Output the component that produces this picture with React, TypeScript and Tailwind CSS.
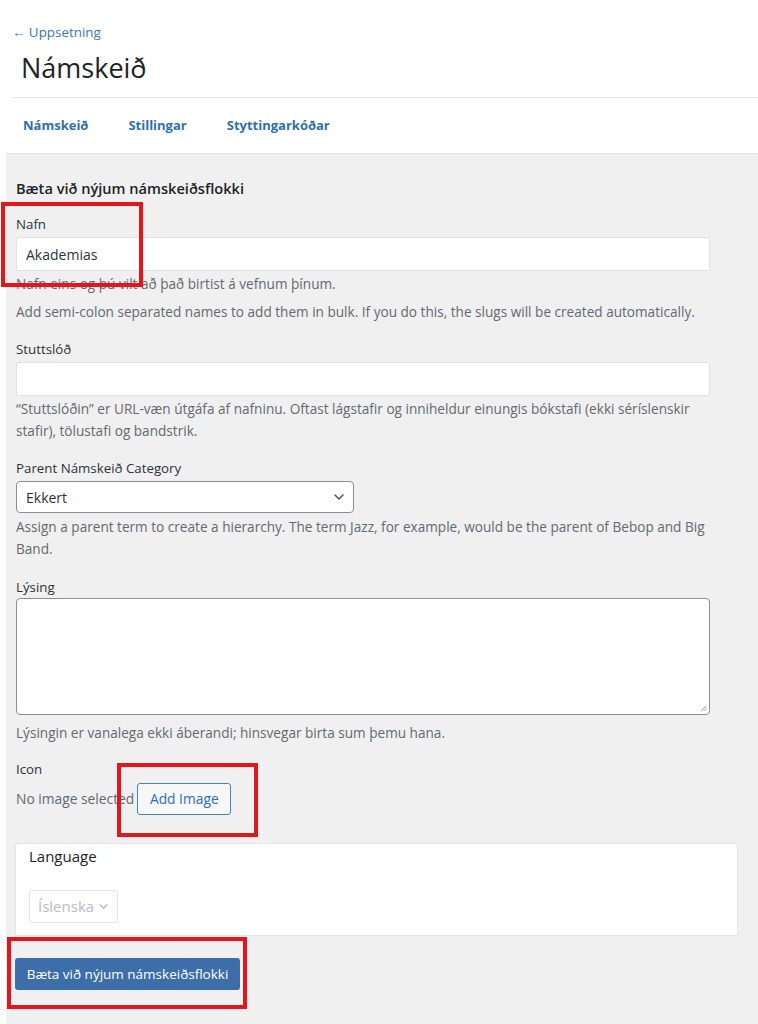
import React from "react";

const font = { fontFamily: '"Open Sans", "Noto Sans", sans-serif' };

function Help({ children, className = "" }: { children: React.ReactNode; className?: string }) {
  return <p className={`text-[13.6px] leading-[22px] text-[#646970] ${className}`}>{children}</p>;
}

function Label({ children, className = "" }: { children: React.ReactNode; className?: string }) {
  return <div className={`text-[13.3px] leading-[20px] text-[#2c3338] ${className}`}>{children}</div>;
}

function Chevron({ className = "" }: { className?: string }) {
  return (
    <svg viewBox="0 0 12 8" className={className} fill="none" stroke="currentColor" strokeWidth="1.6" strokeLinecap="round" strokeLinejoin="round">
      <path d="M2 2l4 4 4-4" />
    </svg>
  );
}

export default function App() {
  return (
    <div className="relative w-[758px] min-h-[1024px] bg-white overflow-hidden" style={font}>
      {/* header */}
      <div className="pt-[22px] pl-[12px] text-[13.4px] leading-[20px] text-[#3a78b7]">← Uppsetning</div>
      <h1 className="mt-[8px] pl-[21px] text-[27px] leading-[36px] font-medium text-[#1d2327]">Námskeið</h1>
      <div className="mt-[11px] ml-[12px] border-t border-[#e5e5e5]" />
      <nav className="h-[55px] flex items-center gap-[40px] pl-[23px] text-[13px] font-bold text-[#2f6fae]">
        <span>Námskeið</span>
        <span>Stillingar</span>
        <span>Styttingarkóðar</span>
      </nav>

      {/* panel */}
      <div className="ml-[6px] bg-[#f0f0f1] border-t border-[#e2e2e2] pl-[10px] pr-[48px] pb-[40px] min-h-[871px]">
        <h2 className="pt-[24px] text-[14.6px] leading-[20px] font-semibold text-[#1d2327]">Bæta við nýjum námskeiðsflokki</h2>

        <Label className="mt-[16px]">Nafn</Label>
        <div className="mt-[3px] h-[34px] bg-white border border-[#e2e2e2] rounded-[2px] flex items-center pl-[9px] text-[14px] text-[#2c3338]">
          Akademias
        </div>
        <Help className="mt-[2px]">Nafn eins og þú vilt að það birtist á vefnum þínum.</Help>
        <Help className="mt-[6px]">Add semi-colon separated names to add them in bulk. If you do this, the slugs will be created automatically.</Help>

        <Label className="mt-[16px]">Stuttslóð</Label>
        <div className="mt-[3px] h-[34px] bg-white border border-[#e2e2e2] rounded-[2px]" />
        <Help className="mt-[2px]">
          “Stuttslóðin” er URL-væn útgáfa af nafninu. Oftast lágstafir og inniheldur einungis bókstafi (ekki séríslenskir stafir), tölustafi og bandstrik.
        </Help>

        <Label className="mt-[16px]">Parent Námskeið Category</Label>
        <div className="mt-[3px] w-[338px] h-[32px] bg-white border border-[#8c8f94] rounded-[4px] flex items-center justify-between pl-[9px] pr-[8px] text-[14px] text-[#2c3338]">
          <span>Ekkert</span>
          <Chevron className="w-[12px] h-[8px] text-[#50575e]" />
        </div>
        <Help className="mt-[3px]">
          Assign a parent term to create a hierarchy. The term Jazz, for example, would be the parent of Bebop and Big Band.
        </Help>

        <Label className="mt-[17px]">Lýsing</Label>
        <div className="mt-[1px] relative h-[117px] bg-white border border-[#8c8f94] rounded-[4px]">
          <svg viewBox="0 0 8 8" className="absolute right-[2px] bottom-[2px] w-[7px] h-[7px]" stroke="#9a9a9a" strokeWidth="1">
            <path d="M1 7L7 1M4 7L7 4" />
          </svg>
        </div>
        <Help className="mt-[7px]">Lýsingin er vanalega ekki áberandi; hinsvegar birta sum þemu hana.</Help>

        <Label className="mt-[15px]">Icon</Label>
        <div className="mt-[4px] flex items-center gap-[3px]">
          <span className="text-[13.8px] text-[#646970]">No image selected</span>
          <button className="h-[32px] w-[94px] bg-[#f6f7f7] border border-[#4a7fb5] rounded-[3px] text-[13.8px] text-[#2f6fae]">
            Add Image
          </button>
        </div>

        <div className="mt-[28px] -ml-[1px] w-[723px] bg-white border border-[#e4e4e4] rounded-[3px] pt-[2px] pl-[13px] pb-[12px]">
          <div className="text-[15px] leading-[20px] text-[#1d2327]">Language</div>
          <div className="mt-[24px] w-[89px] h-[33px] border border-[#e4e4e4] rounded-[3px] flex items-center justify-between pl-[8px] pr-[8px] text-[15px] text-[#b9bcbf]">
            <span>Íslenska</span>
            <Chevron className="w-[11px] h-[7px] text-[#b9bcbf]" />
          </div>
        </div>

        <button className="mt-[22px] -ml-[1px] w-[225px] h-[32px] bg-[#3d6eaa] rounded-[3px] text-[13.5px] text-white">
          Bæta við nýjum námskeiðsflokki
        </button>
      </div>

      {/* annotation boxes */}
      <div className="absolute left-[1px] top-[202px] w-[142px] h-[85px] border-[4px] border-[#e3151d]" />
      <div className="absolute left-[117px] top-[763px] w-[141px] h-[74px] border-[4px] border-[#e3151d]" />
      <div className="absolute left-[7px] top-[937px] w-[240px] h-[72px] border-[4px] border-[#e3151d]" />
    </div>
  );
}
